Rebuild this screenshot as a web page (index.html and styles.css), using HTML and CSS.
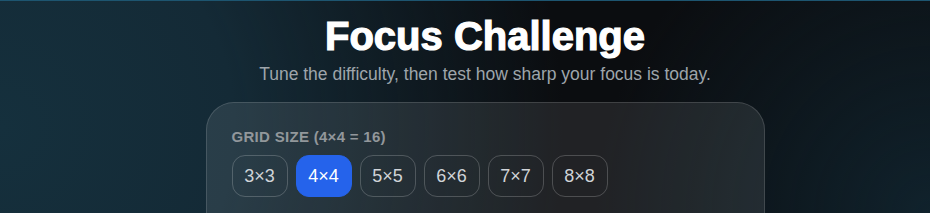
FILE: index.html
```html
<!DOCTYPE html>
<html lang="en">
<head>
  <meta charset="UTF-8" />
  <title>Focus Challenge</title>
  <link rel="stylesheet" href="styles.css">
</head>
<body>
  <div class="page">
    <header class="hero">
      <h1>Focus Challenge</h1>
      <p class="lead">Tune the difficulty, then test how sharp your focus is today.</p>
    </header>

    <section class="card">
      <div class="label" id="gridLabel">Grid size (4×4 = 16)</div>
      <div class="options">
        <button class="opt" onclick="pick(this, 3)">3×3</button>
        <button class="opt active" onclick="pick(this, 4)">4×4</button>
        <button class="opt" onclick="pick(this, 5)">5×5</button>
        <button class="opt" onclick="pick(this, 6)">6×6</button>
        <button class="opt" onclick="pick(this, 7)">7×7</button>
        <button class="opt" onclick="pick(this, 8)">8×8</button>
      </div>
    </section>
  </div>

  <script>
    const label = document.getElementById("gridLabel");

    function pick(btn, n) {
      document.querySelectorAll(".opt").forEach(b => b.classList.remove("active"));
      btn.classList.add("active");
      label.innerText = `Grid size (${n}×${n} = ${n * n})`;
    }
  </script>
</body>
</html>
```

FILE: styles.css
```css
html, body {
  margin: 0;
  height: 100%;
}

body {
  font-family: "Liberation Sans", Arial, sans-serif;
  color: #fff;
  border-top: 1px solid #1d5570;
  background-color: #0b0d10;
  background-image:
    radial-gradient(circle at 0 60%, #15303d 0, #142a36 25%, rgba(20, 42, 54, 0) 60%),
    radial-gradient(circle at 100% 100%, #10222c 0, rgba(16, 34, 44, 0) 35%);
  overflow: hidden;
}

.page {
  padding: 0 0 0 40px;
}

.hero {
  text-align: center;
  padding-top: 12px;
}

h1 {
  margin: 0;
  font-size: 40px;
  font-weight: 900;
  line-height: 46px;
  -webkit-text-stroke: 1.2px #fff;
}

.lead {
  margin: 5px 0 0;
  font-size: 17.5px;
  color: #9ea5ab;
}

.card {
  width: 559px;
  margin: 17px auto 0;
  padding: 25px;
  border: 1px solid rgba(255, 255, 255, 0.14);
  border-radius: 28px;
  background: rgba(255, 255, 255, 0.09);
  box-sizing: border-box;
  min-height: 160px;
}

.label {
  font-size: 15px;
  font-weight: bold;
  text-transform: uppercase;
  color: #92979b;
  letter-spacing: 0.3px;
}

.options {
  display: flex;
  gap: 8px;
  margin-top: 10px;
}

.opt {
  width: 56px;
  height: 42px;
  padding: 0;
  font-family: inherit;
  font-size: 18px;
  color: #d0d4d8;
  background: transparent;
  border: 1px solid rgba(255, 255, 255, 0.2);
  border-radius: 13px;
  cursor: pointer;
}

.opt.active {
  background: #2563eb;
  border-color: #2563eb;
  color: #fff;
}
```
